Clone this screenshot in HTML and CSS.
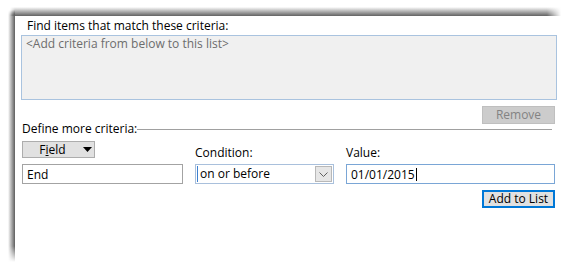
FILE: index.html
```html
<!DOCTYPE html>
<html>
<head>
<meta charset="utf-8">
<link rel="stylesheet" href="styles.css">
</head>
<body>
<div class="frame">
  <div class="shadow-top"></div>
  <div class="shadow-left"></div>
  <div class="content">
    <div class="title">Find items that match these criteria:</div>
    <div class="listbox"><span class="placeholder">&lt;Add criteria from below to this list&gt;</span></div>
    <div class="btn-row"><button class="btn btn-disabled remove">Remove</button></div>
    <div class="define-row"><span class="define-label">Define more criteria:</span><span class="rule"></span></div>
    <div class="criteria">
      <button class="btn field-btn"><span class="field-text">F<u>i</u>eld</span><svg class="tri" width="9" height="5" viewBox="0 0 9 5"><path d="M0 0H9L4.5 5Z" fill="#000"/></svg></button>
      <div class="label">Condition:</div>
      <div class="label">Value:</div>
      <div class="input">End</div>
      <div class="combo"><span class="combo-text">on or before</span><span class="combo-btn"><svg width="9" height="5" viewBox="0 0 9 5"><path d="M0.5 0.5L4.5 4.5L8.5 0.5" fill="none" stroke="#606060" stroke-width="1"/></svg></span></div>
      <div class="input focused">01/01/2015<span class="caret"></span></div>
    </div>
    <div class="btn-row add-row"><button class="btn default">Add to List</button></div>
  </div>
</div>
</body>
</html>
```

FILE: styles.css
```css
html, body {
  margin: 0;
  padding: 0;
  background: #ffffff;
}
body {
  font-family: "Open Sans", "Noto Sans", sans-serif;
  font-size: 12px;
  color: #000;
  width: 561px;
  height: 268px;
  overflow: hidden;
}
.frame {
  display: grid;
  grid-template-columns: 7px 546px;
  grid-template-rows: 9px 246px;
  margin: 7px 0 0 8px;
}
.shadow-top {
  grid-column: 1 / 3;
  grid-row: 1;
  margin-left: 2px;
  background: linear-gradient(to bottom, rgba(110,110,110,0) 0%, rgba(110,110,110,0.55) 50%, #626262 100%);
  -webkit-mask-image: linear-gradient(to right, transparent 0, #000 5px, #000 calc(100% - 14px), transparent 100%);
  mask-image: linear-gradient(to right, transparent 0, #000 5px, #000 calc(100% - 14px), transparent 100%);
}
.shadow-left {
  grid-column: 1;
  grid-row: 2;
  margin-top: -6px;
  background: linear-gradient(to right, rgba(110,110,110,0) 0%, rgba(110,110,110,0.5) 45%, #5e5e5e 100%);
  -webkit-mask-image: linear-gradient(to bottom, transparent 0, #000 5px, #000 calc(100% - 16px), transparent 100%);
  mask-image: linear-gradient(to bottom, transparent 0, #000 5px, #000 calc(100% - 16px), transparent 100%);
}
.content {
  grid-column: 2;
  grid-row: 2;
  background: #fff;
  padding: 2px 0 0 6px;
  display: flex;
  flex-direction: column;
  width: 536px;
}
.title {
  margin-left: 6px;
  line-height: 16px;
  height: 16px;
}
.listbox {
  margin-top: 1px;
  box-sizing: border-box;
  height: 65px;
  border: 1px solid #a9c3df;
  background: #f0f0f0;
  padding: 0 4px;
  line-height: 16px;
}
.placeholder {
  color: #6d6d6d;
}
.btn-row {
  display: flex;
  justify-content: flex-end;
  margin-right: 2px;
}
.btn {
  font-family: inherit;
  font-size: 12px;
  box-sizing: border-box;
  width: 73px;
  height: 18px;
  padding: 0;
  margin: 0;
  line-height: 14px;
  background: #e1e1e1;
  border: 1px solid #adadad;
  color: #000;
}
.remove {
  margin-top: 6px;
}
.btn-disabled {
  background: #cccccc;
  border-color: #bfbfbf;
  color: #838383;
}
.define-row {
  display: flex;
  align-items: center;
  margin-top: -3px;
  margin-left: 1px;
  height: 16px;
  line-height: 16px;
}
.rule {
  flex: 1;
  height: 1px;
  background: #a0a0a0;
  margin-right: 5px;
  margin-top: 1px;
}
.criteria {
  display: grid;
  grid-template-columns: 161px 139px 209px;
  column-gap: 12px;
  grid-template-rows: 20px 20px;
  row-gap: 3px;
  margin-top: 4px;
  margin-left: 1px;
}
.field-btn {
  align-self: start;
  height: 17px;
  display: flex;
  align-items: center;
  justify-content: flex-start;
  padding-left: 16px;
  overflow: visible;
}
.field-text {
  width: 27px;
  white-space: nowrap;
}
.field-btn u {
  text-decoration-thickness: 1px;
}
.tri {
  display: block;
  flex: none;
  margin-left: 17px;
}
.label {
  align-self: end;
  line-height: 16px;
}
.input {
  box-sizing: border-box;
  height: 20px;
  border: 1px solid #a3a3a3;
  padding: 0 4px;
  line-height: 17px;
  display: flex;
  align-items: center;
}
.input.focused {
  border-color: #7aa6d6;
}
.caret {
  display: inline-block;
  width: 1px;
  height: 13px;
  background: #000;
  margin-left: 1px;
}
.combo {
  box-sizing: border-box;
  height: 20px;
  border: 1px solid #a9c0dc;
  display: flex;
  align-items: stretch;
}
.combo-text {
  flex: 1;
  border-left: 1px solid #3d80d0;
  margin: 1px 0 1px 1px;
  padding-left: 2px;
  line-height: 16px;
  display: flex;
  align-items: center;
}
.combo-btn {
  width: 15px;
  margin: 1px 1px 1px 0;
  background: #e6e6e6;
  border: 1px solid #b8b8b8;
  display: flex;
  align-items: center;
  justify-content: center;
}
.add-row {
  margin-top: 6px;
}
.default {
  border: 2px solid #0078d7;
}
```
